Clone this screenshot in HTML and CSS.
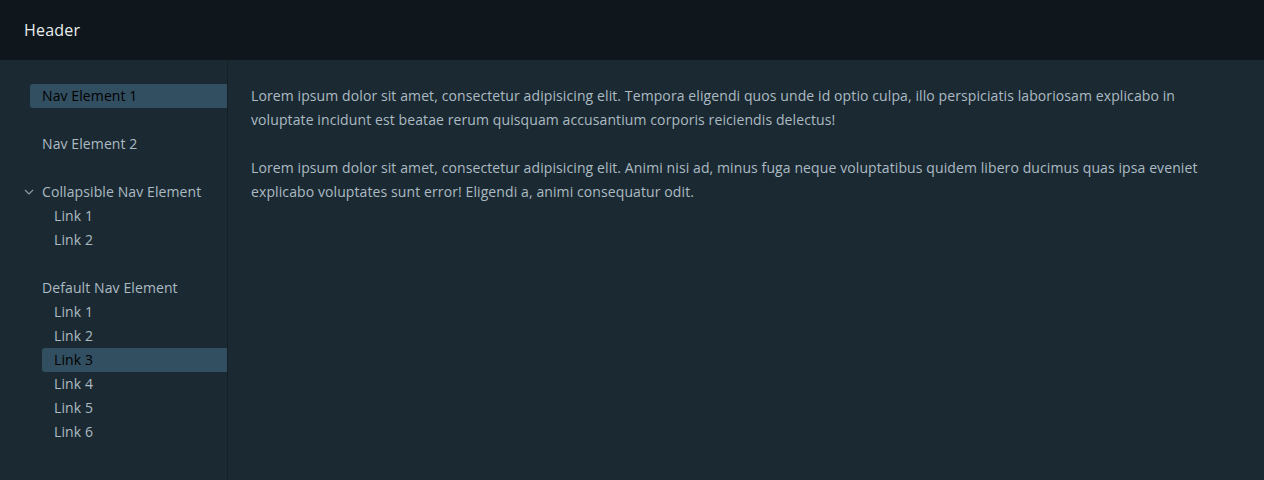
FILE: index.html
```html
<!DOCTYPE html>
<html lang="en">
<head>
<meta charset="utf-8">
<title>Layout</title>
<link rel="stylesheet" href="styles.css">
</head>
<body>
<div class="app">
  <header class="header">
    <span class="branding">Header</span>
  </header>
  <div class="content-container">
    <nav class="sidenav">
      <div class="nav-list">
        <a class="nav-link top active">Nav Element 1</a>
        <a class="nav-link top">Nav Element 2</a>
        <section class="nav-group">
          <div class="nav-group-title">
            <svg class="chev" viewBox="0 0 10 6" width="10" height="6"><path d="M1 1 L5 5 L9 1" fill="none" stroke="currentColor" stroke-width="1.2"/></svg>
            <span>Collapsible Nav Element</span>
          </div>
          <a class="nav-link sub">Link 1</a>
          <a class="nav-link sub">Link 2</a>
        </section>
        <section class="nav-group">
          <div class="nav-group-title">Default Nav Element</div>
          <a class="nav-link sub">Link 1</a>
          <a class="nav-link sub">Link 2</a>
          <a class="nav-link sub active">Link 3</a>
          <a class="nav-link sub">Link 4</a>
          <a class="nav-link sub">Link 5</a>
          <a class="nav-link sub">Link 6</a>
        </section>
      </div>
    </nav>
    <main class="content-area">
      <p>Lorem ipsum dolor sit amet, consectetur adipisicing elit. Tempora eligendi quos unde id optio culpa, illo perspiciatis laboriosam explicabo in voluptate incidunt est beatae rerum quisquam accusantium corporis reiciendis delectus!</p>
      <p>Lorem ipsum dolor sit amet, consectetur adipisicing elit. Animi nisi ad, minus fuga neque voluptatibus quidem libero ducimus quas ipsa eveniet explicabo voluptates sunt error! Eligendi a, animi consequatur odit.</p>
    </main>
  </div>
</div>
</body>
</html>
```
FILE: styles.css
```css
* { box-sizing: border-box; }
html, body { margin: 0; height: 100%; }
body {
  background: #1b2a32;
  font-family: "Open Sans", "Liberation Sans", sans-serif;
  color: #acbac3;
  font-size: 14px;
  letter-spacing: 0.1px;
  overflow: hidden;
}
.app { display: flex; flex-direction: column; height: 480px; }
.header {
  height: 60px;
  flex: none;
  background: #0f171c;
  display: flex;
  align-items: center;
  padding-left: 24px;
}
.branding { color: #e9ecef; font-size: 16px; letter-spacing: 0.2px; }
.content-container { flex: 1; display: flex; min-height: 0; }
.sidenav {
  width: 228px;
  flex: none;
  border-right: 1px solid #152129;
  padding: 24px 0 0 30px;
}
.nav-list { display: flex; flex-direction: column; }
.nav-link {
  display: block;
  height: 24px;
  line-height: 24px;
  color: #acbac3;
  text-decoration: none;
  border-radius: 3px 0 0 3px;
}
.nav-link.top { padding-left: 12px; }
.nav-link.top + .nav-link.top { margin-top: 24px; }
.nav-link.active { background: #324f61; color: #000; }
.nav-group { margin-top: 24px; display: flex; flex-direction: column; }
.nav-group-title {
  height: 24px;
  line-height: 24px;
  padding-left: 12px;
  position: relative;
  color: #acbac3;
}
.chev {
  position: absolute;
  left: -6px;
  top: 9px;
  color: #8b9aa4;
}
.nav-link.sub { margin-left: 12px; padding-left: 12px; }
.content-area { flex: 1; padding: 24px 24px 0 23px; }
.content-area p { margin: 0 0 24px; line-height: 24px; }
```
